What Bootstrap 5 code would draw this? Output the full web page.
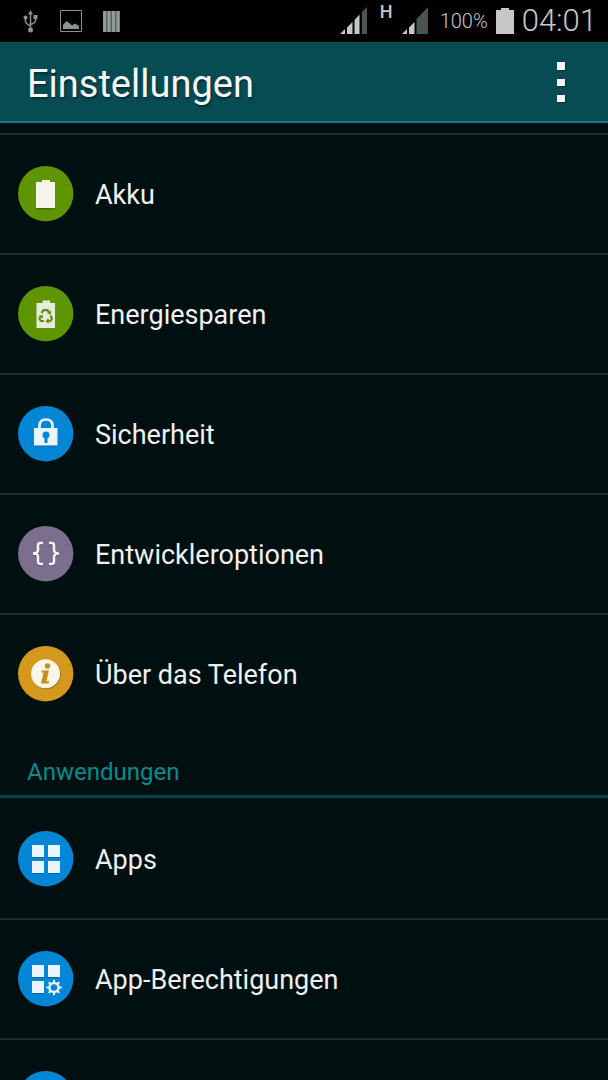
<!DOCTYPE html>
<html lang="de" data-bs-theme="dark">
<head>
<meta charset="utf-8">
<meta name="viewport" content="width=device-width, initial-scale=1">
<title>Einstellungen</title>
<link rel="stylesheet" href="https://cdn.jsdelivr.net/npm/bootstrap@5.3.0/dist/css/bootstrap.min.css">
<style>
  body { background: #000f0f; color: #f0f1f1; font-family: Roboto, "Noto Sans", sans-serif; }
  svg { display: block; flex: none; }
  .statusbar { height: 42px; background: #000; color: #c6c7c9; padding: 0 11px 0 20px; line-height: 42px; }
  .net-type { font-size: 18px; font-weight: 500; line-height: 24px; width: 12px; }
  .charge { font-size: 20px; font-weight: 300; }
  .clock { font-size: 31px; font-weight: 300; line-height: 41px; }
  .titlebar { height: 81px; background: #074c52; border-top: 1px solid #055a63; border-bottom: 2px solid #16757b; padding: 0 34px 0 27px; }
  .titlebar h1 { font-size: 38px; line-height: 48px; font-weight: 400; padding-top: 4px; color: #f6f6f6; text-shadow: 1px 2px 2px #022f34; }
  .more { padding: 8px; color: #f6f6f6; }
  .settings { padding-top: 10px; scrollbar-width: none; }
  .entry { height: 120px; padding: 0 18px; gap: 21px; border: 0; border-top: 2px solid #1d2b2a; color: inherit; font-size: 27px; line-height: 36px; }
  .entry span { padding-top: 1px; }
  .entry.first { border-top-color: transparent; }
  .section-title { height: 65px; border-bottom: 3px solid #04434b; padding: 23px 27px 0; margin: 0; color: #088c90; font-size: 24px; line-height: 32px; font-weight: 400; }
</style>
</head>
<body>
<div class="d-flex flex-column vh-100 overflow-hidden">
  <div class="statusbar d-flex justify-content-between flex-shrink-0">
    <div class="d-flex align-items-center gap-3">
      <svg width="22" height="26" viewBox="0 0 22 26" role="img" aria-label="USB" fill="#899394" stroke="#899394">
        <path d="M10.500 4V23M5.500 10V13.500Q5.500 15.500 10.500 18M15.500 9V13Q15.500 15 10.500 16.500" fill="none" stroke-width="1.500"/>
        <path d="M10.500 2L13 6.500H8Z" stroke="none"/><circle cx="5.500" cy="9.500" r="2" stroke="none"/><path d="M13.500 7h4v4h-4z" stroke="none"/><circle cx="10.500" cy="22" r="2.500" stroke="none"/>
      </svg>
      <svg width="24" height="24" viewBox="0 0 24 24" role="img" aria-label="Bild">
        <path d="M2.500 1.500H23.500V22.500H2.500Z" fill="none" stroke="#899394"/>
        <path d="M5 20V16L8.500 12L12 14.500L14 16.500L17 14.500L21 17V20Z" fill="#899394"/>
      </svg>
      <svg class="ms-1" width="18" height="24" viewBox="0 0 18 24" role="img" aria-label="Balken">
        <path d="M1 2H18V23H1Z" fill="#596061"/><path d="M1 2h3v21h-3zM5.500 2h3v21h-3zM10 2h3v21h-3zM14.500 2h3v21h-3z" fill="#929b9c"/>
      </svg>
    </div>
    <div class="d-flex">
      <svg class="align-self-center" width="28" height="28" viewBox="0 0 28 28" role="img" aria-label="Signal SIM 1">
        <path d="M0 27L5 22V27ZM7 27V20.500L12.500 15V27ZM14.500 27V13L19.500 7.500V27Z" fill="#c6c7c9"/><path d="M22 27V5L27 0V27Z" fill="#4b5455"/>
      </svg>
      <span class="net-type ms-2 me-2 ps-1">H</span>
      <svg class="align-self-center ms-1 me-1" width="28" height="28" viewBox="-2 0 28 28" role="img" aria-label="Signal SIM 2">
        <path d="M0 27L5 22V27ZM7 27V20.500L12.500 15V27Z" fill="#c6c7c9"/><path d="M14.500 27V12L26 0V27Z" fill="#4b5455"/>
      </svg>
      <span class="charge ms-2 me-2">100%</span>
      <svg class="align-self-center me-2" width="18" height="28" viewBox="0 0 18 28" role="img" aria-label="Akku"><path d="M5 1H13V3H18V27H0V3H5Z" fill="#c6c7c9"/></svg>
      <span class="clock">04:01</span>
    </div>
  </div>

  <header class="titlebar d-flex align-items-center justify-content-between flex-shrink-0">
    <h1 class="m-0">Einstellungen</h1>
    <button type="button" class="btn more border-0" aria-label="Weitere Optionen">
      <svg width="10" height="42" viewBox="0 0 10 42"><path d="M2 2h8v8h-8zM2 19h8v7h-8zM2 35h8v7h-8z" fill="#022f34"/><path d="M1 1h8v8h-8zM1 18h8v7h-8zM1 34h8v7h-8z" fill="#f6f6f6"/></svg>
    </button>
  </header>

  <main class="settings flex-grow-1 overflow-auto">
    <nav aria-label="System">
      <a href="#akku" class="entry d-flex align-items-center text-decoration-none">
        <svg width="56" height="56" viewBox="0 0 56 56" aria-hidden="true"><circle cx="27.700" cy="27.700" r="27.700" fill="#5f9500"/><path d="M18 17.500H24V15.500H32V17.500H37V43.500H18Z" fill="#467000"/><path d="M18 16H24V14H32V16H37V42H18Z" fill="#f4f4e8"/></svg>
        <span>Akku</span>
      </a>
      <a href="#energie" class="entry d-flex align-items-center text-decoration-none">
        <svg width="56" height="56" viewBox="0 0 56 56" aria-hidden="true"><circle cx="27.700" cy="27.700" r="27.700" fill="#5f9500"/><path d="M18.500 17H24.500V14.500H32V17H37V42H18.500Z" fill="#e6eadf"/>
          <g fill="none" stroke="#5f9500" stroke-width="2.200"><path d="M23.500 27L25.500 24.200H29.500L31 26.500"/><path d="M32.500 29.500L34 32.500L32.500 35H30"/><path d="M26 35H22.800L21.500 32.800L22.800 30.500"/></g>
          <path d="M33 24.500V28.500L29 27.500ZM30.500 32V38L27.500 35ZM20.500 30L24.500 28.800L25 32.500Z" fill="#5f9500"/></svg>
        <span>Energiesparen</span>
      </a>
      <a href="#sicherheit" class="entry d-flex align-items-center text-decoration-none">
        <svg width="56" height="56" viewBox="0 0 56 56" aria-hidden="true"><circle cx="27.700" cy="27.700" r="27.700" fill="#0486d6"/><path d="M21.500 23V20Q21.500 13.500 28 13.500T34.500 20V23" fill="none" stroke="#e9f4fc" stroke-width="2.700"/><path d="M16 23H39.500V40.500H16Z" fill="#0468a8"/><path d="M16 22H39.500V39.500H16Z" fill="#e9f4fc"/><circle cx="28" cy="29" r="3.500" fill="#0486d6"/><path d="M26.500 30H29.500V37H26.500Z" fill="#0486d6"/></svg>
        <span>Sicherheit</span>
      </a>
      <a href="#entwickler" class="entry d-flex align-items-center text-decoration-none">
        <svg width="56" height="56" viewBox="0 0 56 56" aria-hidden="true"><circle cx="27.700" cy="27.700" r="27.700" fill="#7b6f8d"/><g fill="none" stroke-width="2.500"><path d="M25 17H22.500Q20 17 20 19.500V24Q20 27.500 15 27.500Q20 27.500 20 31V35.500Q20 38 22.500 38H25M31 17H33.500Q36 17 36 19.500V24Q36 27.500 41 27.500Q36 27.500 36 31V35.500Q36 38 33.500 38H31" stroke="#554b64" transform="translate(0 1)"/><path d="M25 17H22.500Q20 17 20 19.500V24Q20 27.500 15 27.500Q20 27.500 20 31V35.500Q20 38 22.500 38H25M31 17H33.500Q36 17 36 19.500V24Q36 27.500 41 27.500Q36 27.500 36 31V35.500Q36 38 33.500 38H31" stroke="#f6f5f7"/></g></svg>
        <span>Entwickleroptionen</span>
      </a>
      <a href="#telefon" class="entry d-flex align-items-center text-decoration-none">
        <svg width="56" height="56" viewBox="0 0 56 56" aria-hidden="true"><circle cx="27.700" cy="27.700" r="27.700" fill="#d3981c"/><circle cx="28.300" cy="28.600" r="14.500" fill="#94690c"/><circle cx="27.600" cy="27.700" r="14.500" fill="#f8f6e9"/><circle cx="29.500" cy="20" r="2.700" fill="#c8901b"/><path d="M24 24.500H31L28.300 35.500Q29.500 35.500 31 34.500L30.500 37.500H23L25.500 26.500H23.500Z" fill="#c8901b"/></svg>
        <span>Über das Telefon</span>
      </a>
    </nav>
    <h2 class="section-title">Anwendungen</h2>
    <nav aria-label="Anwendungen">
      <a href="#apps" class="entry first d-flex align-items-center text-decoration-none">
        <svg width="56" height="56" viewBox="0 0 56 56" aria-hidden="true"><circle cx="27.700" cy="27.700" r="27.700" fill="#0486d6"/><path d="M14 15h12v12h-12zM30 15h12v12h-12zM14 31h12v12h-12zM30 31h12v12h-12z" fill="#0468a8"/><path d="M14 14h12v12h-12zM30 14h12v12h-12zM14 30h12v12h-12zM30 30h12v12h-12z" fill="#e9f4fc"/></svg>
        <span>Apps</span>
      </a>
      <a href="#berechtigungen" class="entry d-flex align-items-center text-decoration-none">
        <svg width="56" height="56" viewBox="0 0 56 56" aria-hidden="true"><circle cx="27.700" cy="27.700" r="27.700" fill="#0486d6"/><path d="M14 15h12v12h-12zM30 15h12v12h-12zM14 31h12v12h-12z" fill="#0468a8"/><path d="M14 14h12v12h-12zM30 14h12v12h-12zM14 30h12v12h-12z" fill="#e9f4fc"/>
          <g stroke="#e9f4fc" fill="none"><circle cx="36" cy="36.500" r="4.500" stroke-width="2.500"/><path d="M36 28.800V32M36 41V44.200M28.300 36.500H31.500M40.500 36.500H43.700M30.600 31.100L32.800 33.300M39.200 39.700L41.400 41.900M41.400 31.100L39.200 33.300M32.800 39.700L30.600 41.900" stroke-width="2"/></g></svg>
        <span>App-Berechtigungen</span>
      </a>
      <div class="entry d-flex align-items-center" aria-hidden="true">
        <svg width="56" height="56" viewBox="0 0 56 56"><circle cx="27.700" cy="27.700" r="27.700" fill="#0486d6"/></svg>
      </div>
    </nav>
  </main>
</div>
<script src="https://cdn.jsdelivr.net/npm/bootstrap@5.3.0/dist/js/bootstrap.bundle.min.js"></script>
</body>
</html>
